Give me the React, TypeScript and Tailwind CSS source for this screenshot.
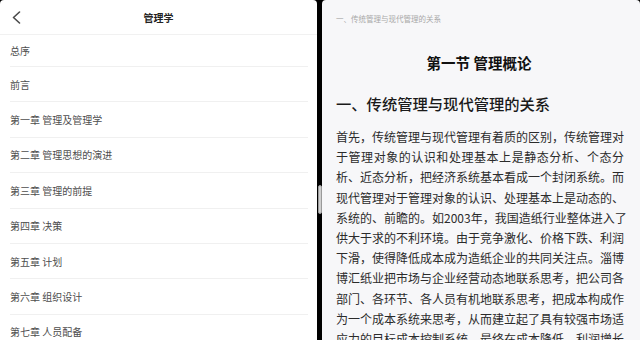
const chapters = [
  '总序',
  '前言',
  '第一章 管理及管理学',
  '第二章 管理思想的演进',
  '第三章 管理的前提',
  '第四章 决策',
  '第五章 计划',
  '第六章 组织设计',
  '第七章 人员配备',
];

const bodyLines = [
  '首先，传统管理与现代管理有着质的区别，传统管理对',
  '于管理对象的认识和处理基本上是静态分析、个态分',
  '析、近态分析，把经济系统基本看成一个封闭系统。而',
  '现代管理对于管理对象的认识、处理基本上是动态的、',
  '系统的、前瞻的。如2003年，我国造纸行业整体进入了',
  '供大于求的不利环境。由于竞争激化、价格下跌、利润',
  '下滑，使得降低成本成为造纸企业的共同关注点。淄博',
  '博汇纸业把市场与企业经营动态地联系思考，把公司各',
  '部门、各环节、各人员有机地联系思考，把成本构成作',
  '为一个成本系统来思考，从而建立起了具有较强市场适',
  '应力的目标成本控制系统，最终在成本降低、利润增长',
];

const font = "font-['Noto_Sans_CJK_SC','Noto_Sans',sans-serif]";

function ChapterList() {
  return (
    <div className="w-[317px] shrink-0 bg-white rounded-tl-[4px] rounded-tr-[4px] overflow-hidden flex flex-col">
      <div className="h-[35px] shrink-0 grid grid-cols-[40px_1fr_40px] items-center border-b border-[#f1f1f1]">
        <div className="pl-[12px] pt-[1px]">
          <svg width="9" height="13" viewBox="0 0 9 13" fill="none">
            <polyline points="7.5,1 1.5,6.5 7.5,12" stroke="#4a4a4a" strokeWidth="1.6" strokeLinecap="round" strokeLinejoin="round" />
          </svg>
        </div>
        <div className="text-center text-[10px] font-bold text-[#222]">管理学</div>
        <div />
      </div>
      <div className="flex flex-col px-[10px] pr-[9px]">
        {chapters.map((c, i) => (
          <div
            key={c}
            className={`${i === 0 ? 'h-[32px]' : 'h-[35.4px]'} shrink-0 flex items-center border-b border-[#f0f0f0] text-[10px] text-[#4d4d4d]`}
          >
            {c}
          </div>
        ))}
      </div>
    </div>
  );
}

function Reader() {
  return (
    <div className="flex-1 bg-[#f7f7f9] rounded-tl-[4px] rounded-tr-[4px] overflow-hidden pl-[14px] pr-[16px]">
      <div className="mt-[14px] h-[10px] leading-[10px] text-[7.5px] text-[#a8a8a8]">一、传统管理与现代管理的关系</div>
      <div className="mt-[29px] h-[20px] leading-[20px] text-center text-[14.5px] font-bold text-[#111] pr-[2px]">第一节 管理概论</div>
      <div className="mt-[19px] h-[22px] leading-[22px] text-[15.3px] font-medium text-[#1a1a1a]">一、传统管理与现代管理的关系</div>
      <div className="mt-[13px] w-[288px] text-[12px] text-[#2b2b2b]">
        {bodyLines.map((l) => (
          <div key={l} className="h-[20.2px] leading-[20.2px] whitespace-nowrap text-justify [text-align-last:justify]">
            {l}
          </div>
        ))}
      </div>
    </div>
  );
}

export default function App() {
  return (
    <div className={`w-[640px] h-[340px] bg-black flex overflow-hidden ${font}`}>
      <ChapterList />
      <div className="w-[5px] shrink-0 flex items-start justify-center">
        <div className="mt-[185px] w-[4px] h-[29px] rounded-[2px] bg-[#cfcfcf] border border-[#9a9a9a]" />
      </div>
      <Reader />
    </div>
  );
}
